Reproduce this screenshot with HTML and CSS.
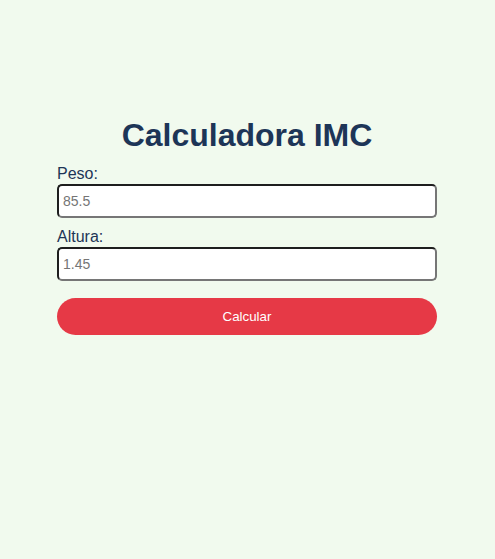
FILE: index.html
```html
<!DOCTYPE html>
<html lang="es">
<head>
<meta charset="utf-8">
<title>Calculadora IMC</title>
<link rel="stylesheet" href="styles.css">
</head>
<body>
<main class="calc">
  <h1 class="calc-title">Calculadora IMC</h1>
  <form class="calc-form">
    <label class="field-label" for="peso">Peso:</label>
    <input class="field-input" id="peso" type="text" placeholder="85.5">
    <label class="field-label" for="altura">Altura:</label>
    <input class="field-input" id="altura" type="text" placeholder="1.45">
    <button class="calc-btn" type="button">Calcular</button>
  </form>
</main>
</body>
</html>
```
FILE: styles.css
```css
html, body {
  margin: 0;
  padding: 0;
}
body {
  background: #f1faee;
  font-family: "Liberation Sans", Arial, sans-serif;
  color: #1d3557;
  min-height: 559px;
}
.calc {
  width: 380px;
  margin: 0 0 0 calc((100% - 381px) / 2);
  padding-top: 117px;
}
.calc-title {
  margin: 0 0 11px;
  font-size: 32px;
  line-height: 37px;
  font-weight: bold;
  text-align: center;
  color: #1d3557;
}
.calc-form {
  display: flex;
  flex-direction: column;
  margin: 0;
}
.field-label {
  display: block;
  font-size: 16px;
  line-height: 18px;
  color: #1d3557;
  margin-bottom: 1px;
}
.field-input {
  display: block;
  box-sizing: border-box;
  width: 100%;
  height: 34px;
  margin: 0 0 10px;
  padding: 0 4px;
  border-width: 2px;
  border-style: solid;
  border-color: #1e1e1e #767676 #767676 #1e1e1e;
  border-radius: 5px;
  background: #ffffff;
  font-family: "Liberation Sans", Arial, sans-serif;
  font-size: 14px;
  color: #222;
}
.field-input::placeholder {
  color: #757575;
}
.calc-btn {
  margin-top: 7px;
  height: 37px;
  width: 100%;
  border: none;
  border-radius: 19px;
  background: #e63946;
  color: #ffffff;
  font-family: "Liberation Sans", Arial, sans-serif;
  font-size: 13.333px;
  cursor: pointer;
}
```
